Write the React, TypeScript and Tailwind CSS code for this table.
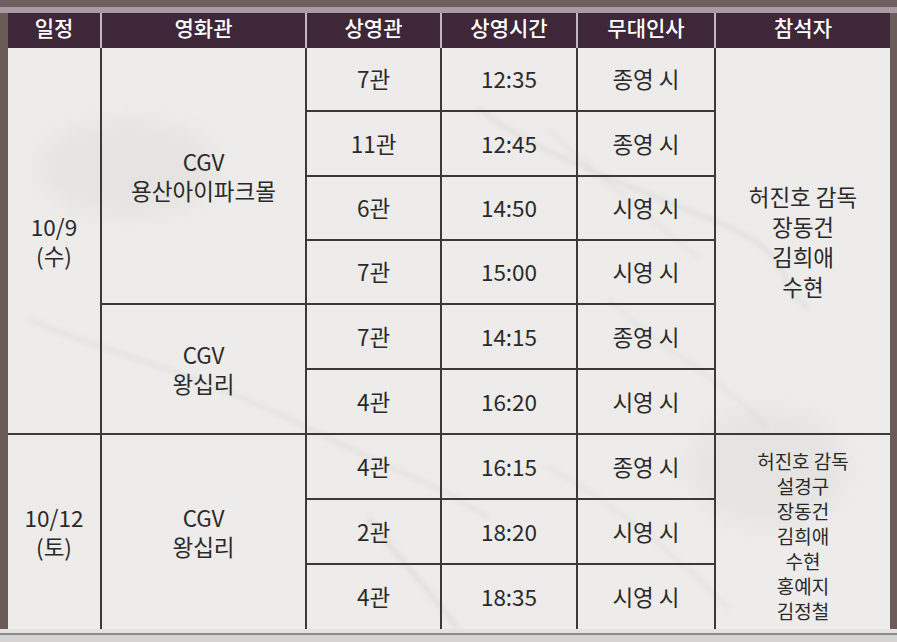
import React from "react";

const font = { fontFamily: '"Noto Sans CJK KR", "Noto Sans", sans-serif' };

const rows = [
  { hall: "7관", time: "12:35", greet: "종영 시" },
  { hall: "11관", time: "12:45", greet: "종영 시" },
  { hall: "6관", time: "14:50", greet: "시영 시" },
  { hall: "7관", time: "15:00", greet: "시영 시" },
  { hall: "7관", time: "14:15", greet: "종영 시" },
  { hall: "4관", time: "16:20", greet: "시영 시" },
  { hall: "4관", time: "16:15", greet: "종영 시" },
  { hall: "2관", time: "18:20", greet: "시영 시" },
  { hall: "4관", time: "18:35", greet: "시영 시" },
];

const rowStarts = [
  "row-start-1",
  "row-start-2",
  "row-start-3",
  "row-start-4",
  "row-start-5",
  "row-start-6",
  "row-start-7",
  "row-start-8",
  "row-start-9",
];

const cell =
  "flex items-center justify-center text-center border-[#3a3a3a] text-[#2a2a2a]";

export default function App() {
  return (
    <div
      className="w-[897px] h-[642px] bg-[#6b5c59] overflow-hidden flex flex-col"
      style={font}
    >
      <div className="h-[7px] bg-[#6d5f5d]" />
      <div className="h-[6px] bg-[#a99ba3]" />
      <div className="flex">
        <div className="w-[8px] bg-[#6b5b57]" />
        <div className="w-[882px] flex flex-col">
          {/* header */}
          <div className="grid grid-cols-[94px_205px_135px_136px_138px_174px] h-[35px] bg-[#3d2739] text-white text-[21px] font-medium">
            {["일정", "영화관", "상영관", "상영시간", "무대인사", "참석자"].map(
              (h, i) => (
                <div
                  key={h}
                  className={`flex items-center justify-center pb-[6px] leading-none ${
                    i < 5 ? "border-r-2 border-[#c4b6bf]" : ""
                  }`}
                >
                  {h}
                </div>
              )
            )}
          </div>
          {/* body */}
          <div className="relative bg-[#edecea]">
            <svg
              className="absolute inset-0 pointer-events-none"
              width="882"
              height="581"
              viewBox="0 0 882 581"
            >
              <defs>
                <filter id="blur" x="-20%" y="-20%" width="140%" height="140%">
                  <feGaussianBlur stdDeviation="2.5" />
                </filter>
                <filter id="blur2" x="-20%" y="-20%" width="140%" height="140%">
                  <feGaussianBlur stdDeviation="10" />
                </filter>
              </defs>
              <g filter="url(#blur2)" fill="#e2e0de" opacity="0.6">
                <ellipse cx="120" cy="120" rx="90" ry="50" />
                <ellipse cx="760" cy="420" rx="80" ry="60" />
              </g>
              <g filter="url(#blur)" stroke="#c2c0be" fill="none" opacity="0.45">
                <path d="M470 60 C 520 100, 600 130, 700 170 S 760 230, 800 260" strokeWidth="2.5" />
                <path d="M540 80 C 580 120, 620 150, 690 210" strokeWidth="1.5" />
                <path d="M20 270 C 80 300, 180 320, 300 380 S 420 430, 480 470" strokeWidth="2" />
                <path d="M360 470 C 390 510, 420 540, 450 581" strokeWidth="3" />
                <path d="M540 420 C 600 450, 660 500, 720 560" strokeWidth="1.5" />
                <path d="M600 250 C 650 300, 700 320, 760 380" strokeWidth="1.5" />
              </g>
            </svg>
            <div className="relative grid grid-cols-[94px_205px_135px_136px_138px_174px] grid-rows-[64px_65px_64px_64px_65px_65px_65px_65px_64px] text-[22.5px]">
              <div
                className={`${cell} col-start-1 row-start-1 row-span-6 border-r-2 border-b-2 flex-col leading-[29px]`}
              >
                <div>10/9</div>
                <div>(수)</div>
              </div>
              <div
                className={`${cell} col-start-1 row-start-7 row-span-3 border-r-2 flex-col leading-[29px]`}
              >
                <div>10/12</div>
                <div>(토)</div>
              </div>
              <div
                className={`${cell} col-start-2 row-start-1 row-span-4 border-r-2 border-b-2 flex-col leading-[29px]`}
              >
                <div>CGV</div>
                <div>용산아이파크몰</div>
              </div>
              <div
                className={`${cell} col-start-2 row-start-5 row-span-2 border-r-2 border-b-2 flex-col leading-[29px]`}
              >
                <div>CGV</div>
                <div>왕십리</div>
              </div>
              <div
                className={`${cell} col-start-2 row-start-7 row-span-3 border-r-2 flex-col leading-[29px]`}
              >
                <div>CGV</div>
                <div>왕십리</div>
              </div>
              {rows.map((r, i) => {
                const bb = i < 8 ? "border-b-2" : "";
                return (
                  <React.Fragment key={i}>
                    <div className={`${cell} col-start-3 ${rowStarts[i]} border-r-2 ${bb}`}>
                      {r.hall}
                    </div>
                    <div className={`${cell} col-start-4 ${rowStarts[i]} border-r-2 ${bb}`}>
                      {r.time}
                    </div>
                    <div className={`${cell} col-start-5 ${rowStarts[i]} border-r-2 ${bb}`}>
                      {r.greet}
                    </div>
                  </React.Fragment>
                );
              })}
              <div
                className={`${cell} col-start-6 row-start-1 row-span-6 border-b-2 flex-col leading-[30px]`}
              >
                <div>허진호 감독</div>
                <div>장동건</div>
                <div>김희애</div>
                <div>수현</div>
              </div>
              <div
                className={`${cell} col-start-6 row-start-7 row-span-3 flex-col text-[19px] leading-[25px] pt-[6px]`}
              >
                <div>허진호 감독</div>
                <div>설경구</div>
                <div>장동건</div>
                <div>김희애</div>
                <div>수현</div>
                <div>홍예지</div>
                <div>김정철</div>
              </div>
            </div>
          </div>
        </div>
        <div className="w-[7px] bg-[#6b5c59]" />
      </div>
      <div className="h-[4px] bg-[#e3e2e0]" />
      <div className="h-[2px] bg-[#8a8988]" />
      <div className="flex-1 bg-[#d6d4d2]" />
    </div>
  );
}
